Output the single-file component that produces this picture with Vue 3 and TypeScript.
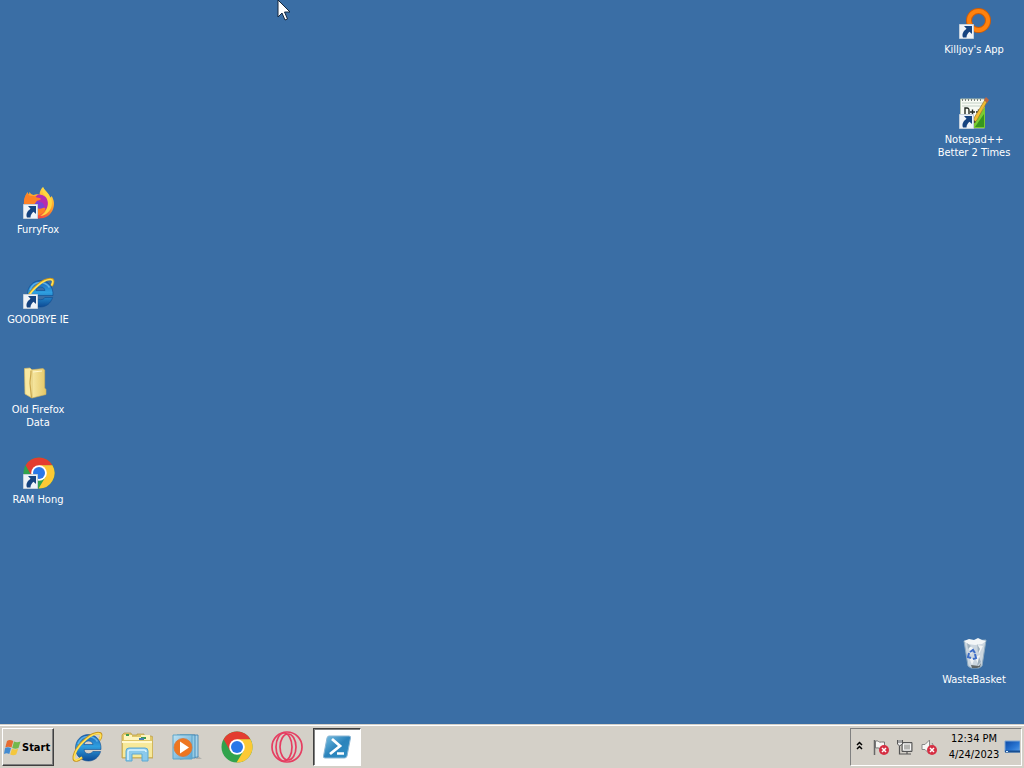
<script setup lang="ts">
interface Shortcut {
  label: string
  icon: string
  row: number
  linked: boolean
}

const leftItems: Shortcut[] = [
  { label: 'FurryFox', icon: 'firefox', row: 3, linked: true },
  { label: 'GOODBYE IE', icon: 'ie', row: 4, linked: true },
  { label: 'Old Firefox Data', icon: 'folder', row: 5, linked: false },
  { label: 'RAM Hong', icon: 'chrome', row: 6, linked: true },
]

const rightItems: Shortcut[] = [
  { label: "Killjoy's App", icon: 'ring', row: 1, linked: true },
  { label: 'Notepad++ Better 2 Times', icon: 'notepad', row: 2, linked: true },
  { label: 'WasteBasket', icon: 'bin', row: 8, linked: false },
]

const columns = [
  { side: 'left', items: leftItems },
  { side: 'right', items: rightItems },
]

const pinned = [
  { name: 'Internet Explorer', icon: 'ie', active: false },
  { name: 'File Explorer', icon: 'explorer', active: false },
  { name: 'Media Player', icon: 'media', active: false },
  { name: 'Chrome', icon: 'chrome', active: false },
  { name: 'Opera', icon: 'opera', active: false },
  { name: 'PowerShell', icon: 'powershell', active: true },
]
</script>

<template>
  <div class="screen">
    <svg class="defs" aria-hidden="true">
      <defs>
        <linearGradient id="g-ie" x1="0" y1="0" x2="0" y2="1">
          <stop offset="0" stop-color="#1c63b4" /><stop offset=".45" stop-color="#2f9fe0" /><stop offset="1" stop-color="#0c4a94" />
        </linearGradient>
        <linearGradient id="g-fox" x1=".8" y1="0" x2=".3" y2="1">
          <stop offset="0" stop-color="#ffe64a" /><stop offset=".5" stop-color="#ff9a28" /><stop offset="1" stop-color="#f0324a" />
        </linearGradient>
        <linearGradient id="g-folder" x1="0" y1="0" x2="1" y2="0">
          <stop offset="0" stop-color="#f9ecab" /><stop offset="1" stop-color="#e5c766" />
        </linearGradient>
        <linearGradient id="g-ps" x1="0" y1="0" x2="1" y2="1">
          <stop offset="0" stop-color="#7cc2e4" /><stop offset=".5" stop-color="#2b83bb" /><stop offset="1" stop-color="#2f8fc4" />
        </linearGradient>
        <linearGradient id="g-tile" x1="0" y1="0" x2="1" y2="1">
          <stop offset="0" stop-color="#bfe2f2" /><stop offset="1" stop-color="#5aa5d3" />
        </linearGradient>
        <linearGradient id="g-screen" x1="0" y1="0" x2="1" y2="1">
          <stop offset="0" stop-color="#0c48a4" /><stop offset=".6" stop-color="#2a77d4" /><stop offset="1" stop-color="#5d9fe6" />
        </linearGradient>

        <symbol id="ie" viewBox="0 0 32 32">
          <path d="M30 18.500H13c.4 2.800 2 4.200 4.600 4.200 2 0 3.400-.8 4.200-2.200H29.600C27.800 26.300 23.300 30 17.500 30 10 30 4.500 24.600 4.500 17S10 3.500 17.500 3.500 30.500 9.500 30 18.500zM13 13.500h9c-.5-2.300-2-3.500-4.400-3.500-2.500 0-4.100 1.200-4.600 3.500z" fill="url(#g-ie)" stroke="#0d4b91" stroke-width=".6" />
          <path d="M7 13c1.500-4 5-7.500 10-7.500 4 0 7.500 2 9.500 5" fill="none" stroke="#73c5f4" stroke-width="1.500" opacity=".7" />
          <path d="M28.500 9C31 5 31 2 27.500 2 20.500 1.800 8 12 4 21.500 1.600 27 2.300 30.500 6 29.500c1.800-.5 3.500-1.600 5.200-3" fill="none" stroke="#c9951d" stroke-width="2.400" />
          <path d="M28.500 8.500C30.500 5 30.200 2.500 27.200 2.500 20.500 2.500 8.500 12.500 4.500 21.500 2.500 26.500 2.800 29.800 6 28.900c1.500-.4 3.200-1.400 4.900-2.700" fill="none" stroke="#ffe257" stroke-width="1.700" />
        </symbol>

        <symbol id="firefox" viewBox="0 0 32 32">
          <path d="M20 0c.5 2.500 3 4 5 6.500 1.500 1.500 2 3 2.400 4.500l1.200-2c2.600 4 3.200 9 1.300 13.500C27.600 28.500 22 31.700 15.500 31.500 7 31.200.8 25 .8 17.500c0-4.500 1-8.500 3.700-12.500.2 1 .7 1.800 1.500 2.500l.4-2.500c1 1.500 2.300 2.600 4.200 2.900 1.900-.8 4-.9 6-.2C16.500 4.500 18 2 20 0z" fill="url(#g-fox)" />
          <circle cx="17" cy="16.500" r="8.300" fill="#7a42d5" />
          <path d="M15 7.500c5.500-.5 10 3.500 10 9 0 3.500-2 6.500-5 8 2-3 2-6 0-8-1.500-1.500-4-1.500-6-3l-3-2z" fill="#b52cb0" />
          <path d="M1 16c0-5 1.500-8.500 3.600-10 .5 2 1.700 2.800 3.900 3 2.500 0 4 .2 5.300 1.400 2 .2 3.800.7 4.200 1.600-1 1.300-3.100 1.300-4.300 2-.6 1.600-1.800 2-2.200 3.500 1 4 5 5 8.500 3.500 2.500-1 3 .4 1.600 2.500-3 4.800-8 5.500-12.600 4.500C4 26.500 1 22 1 16z" fill="#ff8125" />
          <path d="M20 0c-1 4-.5 6 2 8.500 3.500 4 4 10 .5 15.500-1.500 2.500-3.500 4-5.500 5 6-.5 11-5 11.800-11 .4-3.500-.2-6-1.200-8.200l-.6 1.700C26 6 22 4 20 0z" fill="#ffd640" />
        </symbol>

        <symbol id="chrome" viewBox="0 0 32 32">
          <circle cx="16" cy="16" r="15.500" fill="#31a34c" />
          <path d="M2.600 8.200A15.500 15.500 0 0 1 29.400 8.200L16 9 9.200 20z" fill="#e33d30" />
          <path d="M29.400 8.200A15.500 15.500 0 0 1 15.500 31.500L22.500 20 16 8.200z" fill="#fcc934" />
          <circle cx="16" cy="16" r="7.800" fill="#fff" />
          <circle cx="16" cy="16" r="6" fill="#2977e8" />
        </symbol>

        <symbol id="folder" viewBox="0 0 32 32">
          <path d="m7 3 13-1.500 1.700 1.500v18l1.300 1.500v5L9 31z" fill="url(#g-folder)" stroke="#d2b25a" stroke-width=".6" />
          <path d="M1.500 1.500 7 1l2 2v28l-7-4z" fill="#f8e9a1" stroke="#d9bd68" stroke-width=".7" />
          <path d="M8 3.500c0 6-1 8-1 13L8.500 31" fill="none" stroke="#c9a64c" stroke-width="1.200" />
          <path d="m10 5 9-1" stroke="#fff7cf" />
        </symbol>

        <symbol id="ring" viewBox="0 0 32 32">
          <circle cx="19.500" cy="13.500" r="9.500" fill="none" stroke="#cf5d08" stroke-width="6" />
          <circle cx="19.500" cy="13.500" r="9.500" fill="none" stroke="#ff820d" stroke-width="4" />
        </symbol>

        <symbol id="notepad" viewBox="0 0 32 32">
          <path d="M1.500 2h24v29h-24z" fill="#f8fbf4" stroke="#b5c4b1" />
          <path d="M3 6h21M3 9h21M3 24h21M3 27h21" stroke="#c2d0c5" />
          <path d="M15 22 26 10v21H15z" fill="#7acb31" />
          <path d="m16 30 9-13v13z" fill="#37971e" />
          <path d="M3 3h21" stroke="#78827c" stroke-width="2" stroke-dasharray="1 2" />
          <path d="M6 18v-7h2c2 0 2 1 2 3v4M11 15h5M13.500 12.500v5M17 15h5M19.500 12.500v5" fill="none" stroke="#222a22" stroke-width="1.400" />
          <path d="m27 1 2 2-11 20-4 4 1-6z" fill="#f0bc31" stroke="#98772b" stroke-width=".7" />
          <path d="m25 3 2-3 3 3-2 3z" fill="#b96540" /><path d="m14 27 1-4 2 2z" fill="#54452b" />
        </symbol>

        <symbol id="bin" viewBox="0 0 32 32">
          <path d="m5 4 22-1-4 26-3 2h-8l-3-2z" fill="#cbd6df" stroke="#8da9bf" />
          <path d="m5 4 5-2 5 1 4-2 4 2 4 1-4 3-7 1-7-1z" fill="#f3f6f7" />
          <path d="m9 8 5 3-2 7zM18 8l6 1-4 8zM16 20l5-2-2 9zM10 20l5 3-2 5z" fill="#f1f4f5" />
          <path d="m18 7 3 5-2 4zM20 20l2 5-4 4zM8 6l4 3-3 3z" fill="#9eb0bd" />
          <path d="m12 28 8 1 2-3-1 4-3 1h-5z" fill="#5f6666" />
          <path d="m11 15 3-2 2 3M16 17l1 4-3 1M12 21l-3-1 1-4" fill="none" stroke="#3c6dc8" stroke-width="2" />
        </symbol>

        <symbol id="explorer" viewBox="0 0 32 32">
          <path d="M1 6V4l2-2h7l1 2h5V3h7v2h7l2 1v21H1z" fill="#e0c767" stroke="#bca04b" stroke-width=".8" />
          <path d="M2 10h29v16H2z" fill="#f7e99a" />
          <path d="M3 4h8v2h9V4h9v5H3z" fill="#fff4bd" />
          <path d="M5 4h3M20 7h5" stroke="#3c9c50" stroke-width="2" /><path d="M18 8h5" stroke="#477fb6" stroke-width="2" />
          <path d="M1 10h30v2H1z" fill="#fff8ce" />
          <path d="M5 30V20q0-3 3-3h16q3 0 3 3v10h-6v-7H11v7z" fill="#8bcaeb" stroke="#5ca8d2" />
          <path d="M7 29v-8q0-2 2-2h14q2 0 2 2" fill="none" stroke="#d7f3ff" stroke-width="1.500" />
        </symbol>

        <symbol id="media" viewBox="0 0 32 32">
          <path d="m24 28 7 0-4-3z" fill="#9a9c9b" opacity=".6" />
          <path d="M9 4h18v22l-18 2z" fill="#a9d4e9" stroke="#397fae" stroke-width=".8" />
          <path d="M6 4h18v23H6z" fill="#94cae4" stroke="#397fae" stroke-width=".8" />
          <path d="M2 4h19v24H2z" fill="url(#g-tile)" stroke="#5da5c9" />
          <circle cx="12" cy="16.500" r="9" fill="#ee7620" stroke="#d5763b" stroke-width=".8" />
          <path d="m9 10.500 9 6-9 6z" fill="#fff" />
        </symbol>

        <symbol id="opera" viewBox="0 0 32 32">
          <g fill="none" stroke="#e63d61" stroke-width="1.700">
            <circle cx="16" cy="16" r="15" />
            <ellipse cx="13" cy="16" rx="8" ry="14" />
            <ellipse cx="17" cy="16" rx="8" ry="13" />
          </g>
        </symbol>

        <symbol id="powershell" viewBox="0 0 32 32">
          <path d="M8 5h20q2 0 1.500 2L26 25q-.5 2-2.500 2H4q-2 0-1.500-2L6 7q.5-2 2-2z" fill="url(#g-ps)" stroke="#8bb6d4" />
          <path d="m11 8 8 7-10 8" fill="none" stroke="#fff" stroke-width="2.800" /><path d="M16 22.500h7" stroke="#fff" stroke-width="2.500" />
        </symbol>
      </defs>
    </svg>

    <main class="desktop">
      <div v-for="column in columns" :key="column.side" class="column">
        <button
          v-for="item in column.items"
          :key="item.label"
          type="button"
          class="shortcut"
          :class="`row-${item.row}`"
        >
          <span class="picture">
            <svg class="icon" aria-hidden="true"><use :href="`#${item.icon}`" /></svg>
            <svg v-if="item.linked" class="badge" viewBox="0 0 15 15" aria-hidden="true">
              <path d="M.5.500h14v14H.5z" fill="#eef3f8" stroke="#c3cfdb" />
              <path d="M5 2h8v8l-2.500-2.300C8.500 9.500 7.500 11 7.500 13.500H4C2.500 10 4.500 7 7.500 4.700z" fill="#164480" />
            </svg>
          </span>
          <span class="label">{{ item.label }}</span>
        </button>
      </div>
    </main>

    <footer class="taskbar">
      <button type="button" class="start">
        <svg class="flag" viewBox="0 0 17 17" aria-hidden="true">
          <path d="M3 2c2-1.500 4-1 6.300 0L7.500 8.500C5 7.500 3.300 7.500 1.300 8.500z" fill="#e66b32" />
          <path d="M10 2.500c2 1 4 1 6.500 0l-2 6.500c-2 1-4 1-6.300 0z" fill="#73b84b" />
          <path d="M1 9.200c2-1.500 4-1.300 6 0L5.300 15c-2-1.300-3.800-1-5.300 0z" fill="#438bd1" />
          <path d="M8 9.700c2 1 4 1 6.200 0l-2 5.800c-2 1-4 1-6 0z" fill="#f4c73d" />
        </svg>
        <span>Start</span>
      </button>

      <nav class="pinned" aria-label="Pinned programs">
        <button
          v-for="app in pinned"
          :key="app.name"
          type="button"
          class="task"
          :class="{ active: app.active }"
          :aria-label="app.name"
        >
          <svg class="icon" aria-hidden="true"><use :href="`#${app.icon}`" /></svg>
        </button>
      </nav>

      <section class="tray" aria-label="Notification area">
        <button type="button" class="tray-button chevron" aria-label="Show hidden icons">
          <svg width="7" height="9" viewBox="0 0 7 9"><path d="m1 4 2.500-2.500L6 4M1 8l2.500-2.500L6 8" fill="none" stroke="#000" stroke-width="1.500" /></svg>
        </button>
        <button type="button" class="tray-button" aria-label="Action center">
          <svg width="16" height="16" viewBox="0 0 16 16">
            <path d="M1.500 1v15" stroke="#686868" stroke-width="1.500" /><path d="M2.500 2c3-1 3 2 6 1h3v7c-4 1-5-2-9-1z" fill="#f6f5f3" stroke="#777" />
            <circle cx="11" cy="11" r="5" fill="#d52f43" /><path d="m9 9 4 4m0-4-4 4" stroke="#fff" stroke-width="1.500" />
          </svg>
        </button>
        <button type="button" class="tray-button" aria-label="Network">
          <svg width="16" height="16" viewBox="0 0 16 16">
            <path d="M5 3.500h10v9H5z" fill="#b4b4b1" stroke="#555" /><path d="M6.500 5h7v6h-7z" fill="none" stroke="#f7f7f7" />
            <path d="M6 15h8M10 13v2M2.500 7v8h4" fill="none" stroke="#555" stroke-width="1.200" />
            <path d="M.5 1v4l2 2 3-2V1M2 1v3M4 1v3" fill="#eee" stroke="#555" />
          </svg>
        </button>
        <button type="button" class="tray-button" aria-label="Volume muted">
          <svg width="16" height="16" viewBox="0 0 16 16">
            <path d="M1 5.500h3L8.500 1v14L4 10.500H1z" fill="#f7f7f5" stroke="#888" /><path d="M11 4q2 2 1 5" fill="none" stroke="#888" />
            <circle cx="11" cy="11" r="5" fill="#d52f43" /><path d="m9 9 4 4m0-4-4 4" stroke="#fff" stroke-width="1.500" />
          </svg>
        </button>
        <button type="button" class="clock"><span>12:34 PM</span><span>4/24/2023</span></button>
        <button type="button" class="peek" aria-label="Show desktop">
          <svg width="16" height="16" viewBox="0 0 16 16"><path d="M1 2h15v11H1z" fill="url(#g-screen)" stroke="#7da5d3" /><path d="M1 12.500h15" stroke="#184e91" stroke-width="2" /><path d="M2 12.500h2" stroke="#d8edff" /></svg>
        </button>
      </section>
    </footer>

    <svg class="cursor" width="13" height="22" viewBox="0 0 13 22" aria-hidden="true">
      <path d="M1 0v17l4-4 3 7 2.500-1L7.500 12H13z" fill="#fff" stroke="#15263c" stroke-width="1" />
    </svg>
  </div>
</template>

<style>
body {
  margin: 0;
}
</style>

<style scoped>
.screen {
  position: relative;
  display: flex;
  flex-direction: column;
  min-height: 100vh;
  overflow: hidden;
  background: #3a6ea5;
  font: 11px/13px Tahoma, "DejaVu Sans Condensed", "Noto Sans", sans-serif;
}
button {
  box-sizing: border-box;
  margin: 0;
  padding: 0;
  border: 0;
  background: none;
  color: inherit;
  font: inherit;
}
svg {
  display: block;
  flex: none;
}
.defs {
  position: absolute;
  width: 0;
  height: 0;
}
.desktop {
  display: flex;
  flex: 1;
  justify-content: space-between;
  padding-right: 12px;
}
.column {
  display: grid;
  grid-template-rows: repeat(8, 90px);
  grid-template-columns: 76px;
}
.shortcut {
  display: flex;
  flex-direction: column;
  align-items: center;
  gap: 4px;
  padding-top: 7px;
  color: #fff;
}
.row-1 { grid-row: 1; }
.row-2 { grid-row: 2; }
.row-3 { grid-row: 3; }
.row-4 { grid-row: 4; }
.row-5 { grid-row: 5; }
.row-6 { grid-row: 6; }
.row-8 { grid-row: 8; }
.picture {
  position: relative;
  width: 32px;
  height: 32px;
  margin-left: 2px;
}
.icon {
  width: 32px;
  height: 32px;
}
.badge {
  position: absolute;
  left: 0;
  bottom: 0;
  width: 15px;
  height: 15px;
}
.label {
  text-align: center;
}
.taskbar {
  display: flex;
  align-items: stretch;
  box-sizing: border-box;
  height: 44px;
  padding: 2px;
  border-top: 1px solid #d4d0c8;
  box-shadow: inset 0 1px #fff;
  background: #d4d0c8;
  color: #000;
}
.start {
  display: flex;
  align-items: center;
  gap: 1px;
  width: 52px;
  margin: 1px 9px 0 0;
  padding-left: 1px;
  border: 1px solid;
  border-color: #fff #404040 #404040 #fff;
  box-shadow: inset -1px -1px #808080;
  font-weight: bold;
}
.flag {
  width: 17px;
  height: 17px;
}
.pinned {
  display: flex;
  gap: 2px;
  margin-top: 1px;
}
.task {
  display: flex;
  align-items: center;
  justify-content: center;
  width: 48px;
}
.task.active {
  border: 1px solid;
  border-color: #404040 #fff #fff #404040;
  box-shadow: inset 1px 1px #808080;
  background: #fff;
}
.tray {
  display: flex;
  align-items: center;
  gap: 8px;
  box-sizing: border-box;
  margin: 1px 0 0 auto;
  padding: 0 1px 0 5px;
  border: 1px solid;
  border-color: #808080 #fff #fff #808080;
}
.chevron {
  padding: 0 2px 4px 0;
}
.clock {
  display: flex;
  flex-direction: column;
  align-items: center;
  width: 58px;
  line-height: 16px;
}
.peek {
  margin-left: -7px;
}
.cursor {
  position: absolute;
  top: 0;
  left: 277px;
}
</style>
